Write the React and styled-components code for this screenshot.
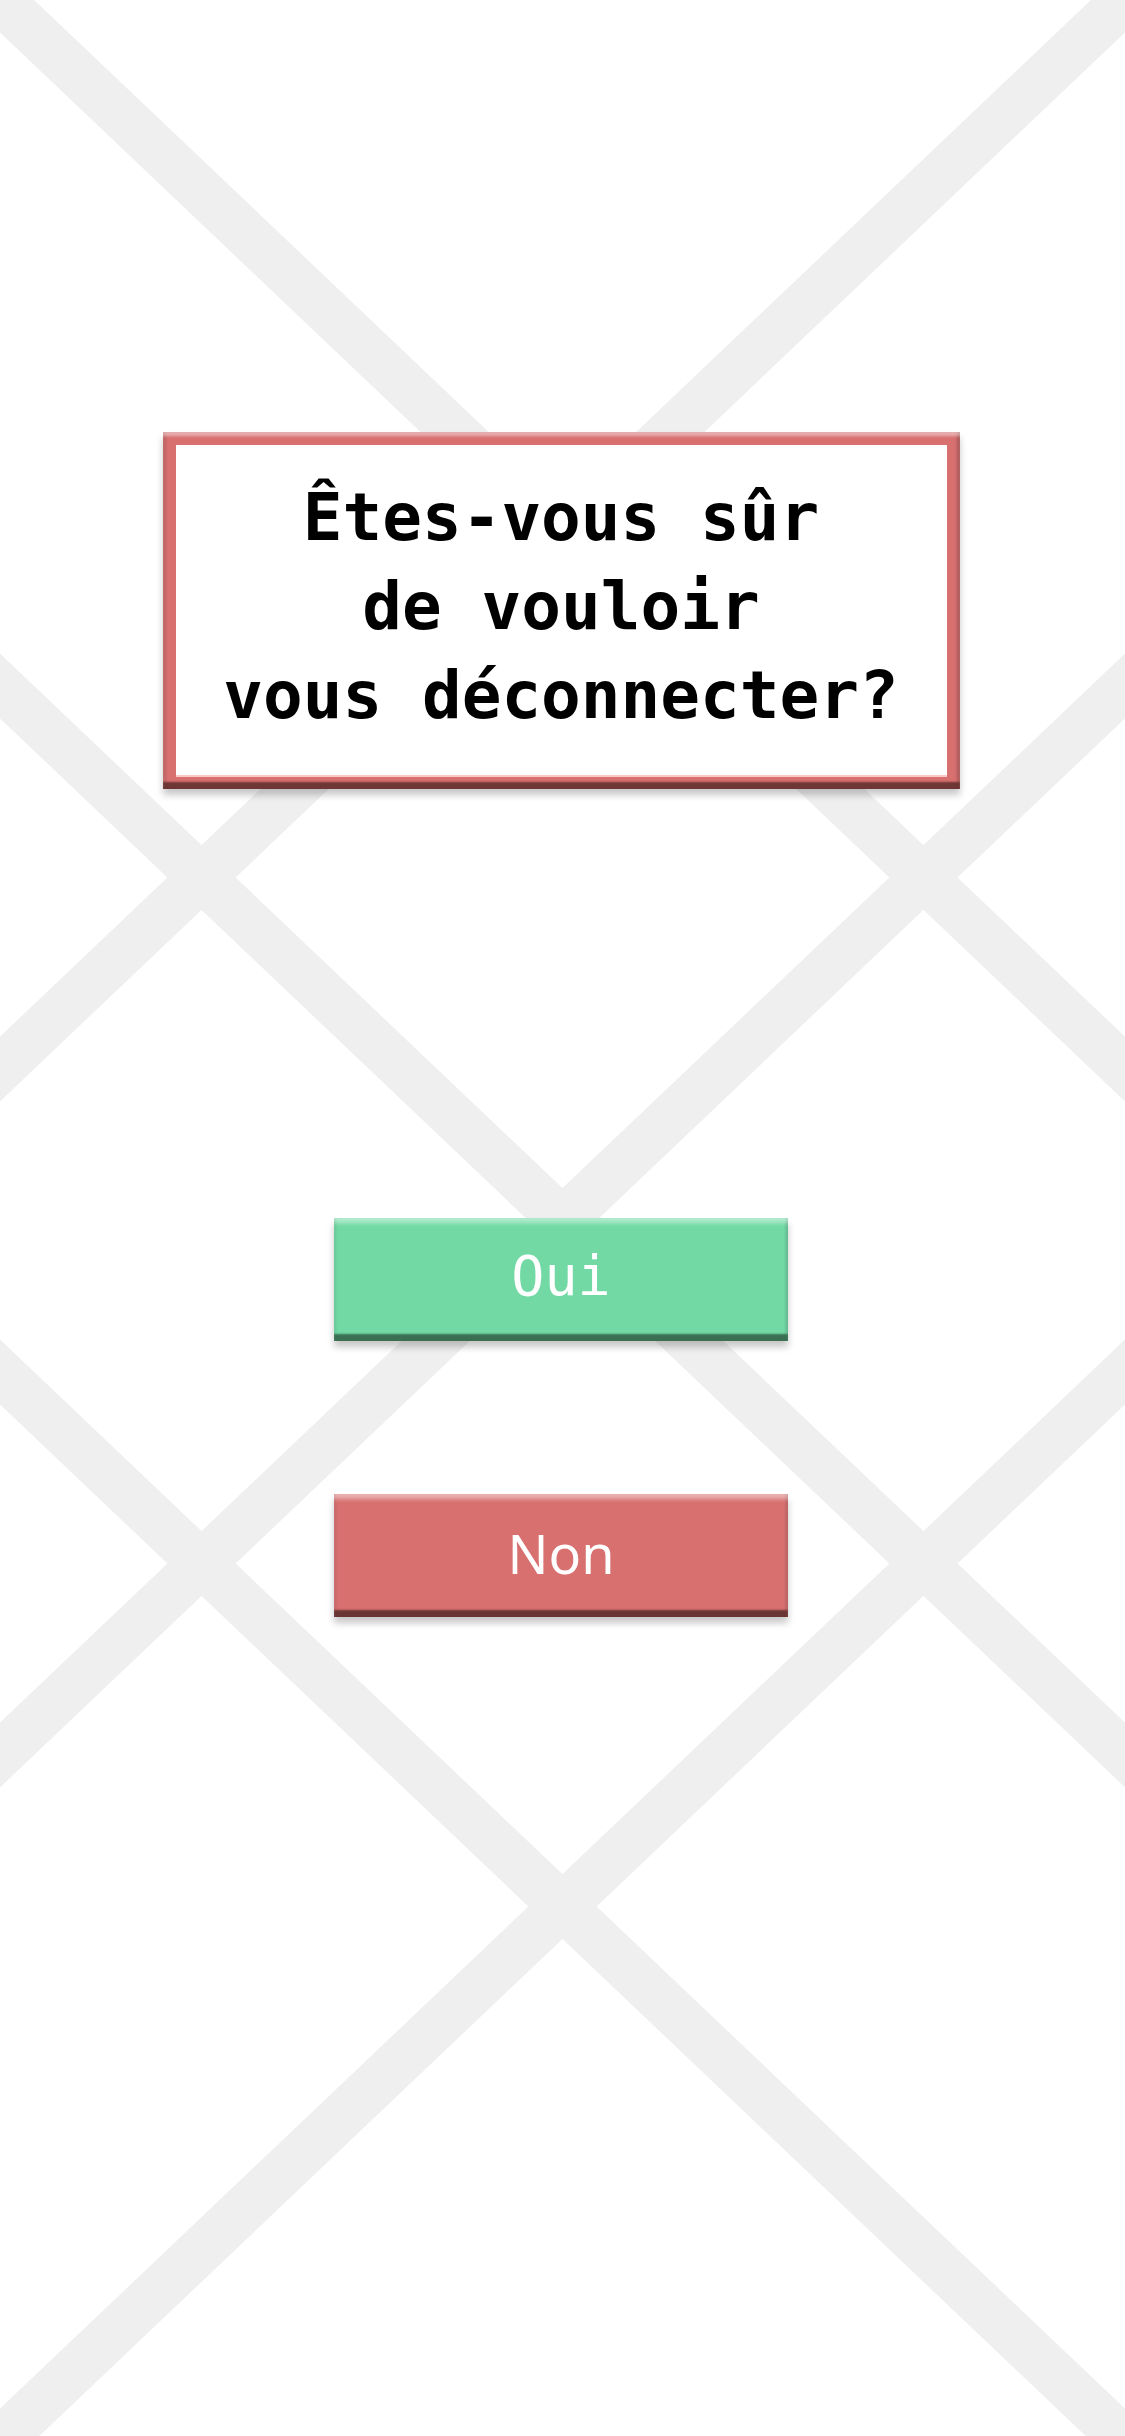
import React from "react";
import styled, { createGlobalStyle } from "styled-components";

const GlobalStyle = createGlobalStyle`
  html, body {
    margin: 0;
    padding: 0;
    background: #ffffff;
  }
  * {
    box-sizing: border-box;
  }
`;

const Page = styled.div`
  position: relative;
  width: 1125px;
  height: 2436px;
  overflow: hidden;
  background: #ffffff;
  font-family: "DejaVu Sans Mono", "Liberation Mono", monospace;
`;

const Backdrop = styled.svg`
  position: absolute;
  top: 0;
  left: 0;
  z-index: 0;
`;

const Content = styled.div`
  position: relative;
  z-index: 1;
  display: flex;
  flex-direction: column;
  align-items: center;
  padding-top: 432px;
  padding-right: 3px;
`;

const DialogFrame = styled.div`
  width: 797px;
  height: 357px;
  padding: 13px 13px 14px 13px;
  background: #d87070;
  box-shadow:
    inset 0 5px 3px -1px rgba(255, 255, 255, 0.45),
    inset 0 -9px 2px -2px rgba(100, 48, 48, 0.9),
    inset 4px 0 3px -1px rgba(0, 0, 0, 0.12),
    inset -4px 0 3px -1px rgba(0, 0, 0, 0.2),
    0 6px 7px rgba(0, 0, 0, 0.22);
`;

const DialogBody = styled.div`
  width: 100%;
  height: 100%;
  background: #ffffff;
  display: flex;
  align-items: center;
  justify-content: center;
  box-shadow: 0 2px 0 rgba(255, 210, 210, 0.9);
`;

const Question = styled.h1`
  margin: 0;
  font-family: "DejaVu Sans Mono", "Liberation Mono", monospace;
  font-weight: bold;
  font-size: 66px;
  line-height: 89px;
  text-align: center;
  color: #000000;
  padding-bottom: 8px;
`;

const Actions = styled.div`
  display: flex;
  flex-direction: column;
  align-items: center;
  gap: 153px;
  margin-top: 429px;
`;

const ActionButton = styled.button`
  width: 454px;
  height: 123px;
  border: none;
  padding: 0 0 6px 0;
  margin: 0;
  cursor: pointer;
  color: #ffffff;
  background: ${(p) => p.$color};
  font-family: ${(p) =>
    p.$mono ? `"DejaVu Sans Mono", "Liberation Mono", monospace` : `"Noto Sans", "Open Sans", sans-serif`};
  font-size: ${(p) => (p.$mono ? "55px" : "54px")};
  line-height: 1;
  box-shadow:
    inset 0 7px 4px -2px rgba(255, 255, 255, 0.45),
    inset 0 -9px 2px -2px ${(p) => p.$dark},
    inset 4px 0 3px -2px rgba(0, 0, 0, 0.1),
    inset -4px 0 3px -2px rgba(0, 0, 0, 0.18),
    0 6px 7px rgba(0, 0, 0, 0.22);
`;

const crosses = [0, 686, 1372];

const CrossPattern = () => (
  <Backdrop width="1125" height="2436" viewBox="0 0 1125 2436">
    {crosses.map((y0) => {
      const k = 1069 / 1125;
      const ext = 200;
      return (
        <g key={y0} stroke="#efefef" strokeWidth="47" fill="none">
          <line x1={-ext} y1={y0 - ext * k} x2={1125 + ext} y2={y0 + 1069 + ext * k} />
          <line x1={1125 + ext} y1={y0 - ext * k} x2={-ext} y2={y0 + 1069 + ext * k} />
        </g>
      );
    })}
  </Backdrop>
);

const App = () => {
  return (
    <Page>
      <GlobalStyle />
      <CrossPattern />
      <Content>
        <DialogFrame>
          <DialogBody>
            <Question>
              Êtes-vous sûr
              <br />
              de vouloir
              <br />
              vous déconnecter?
            </Question>
          </DialogBody>
        </DialogFrame>
        <Actions>
          <ActionButton $color="#72d9a5" $dark="rgba(55, 105, 78, 0.95)" $mono>
            Oui
          </ActionButton>
          <ActionButton $color="#d87070" $dark="rgba(100, 50, 50, 0.95)">
            Non
          </ActionButton>
        </Actions>
      </Content>
    </Page>
  );
};

export default App;
